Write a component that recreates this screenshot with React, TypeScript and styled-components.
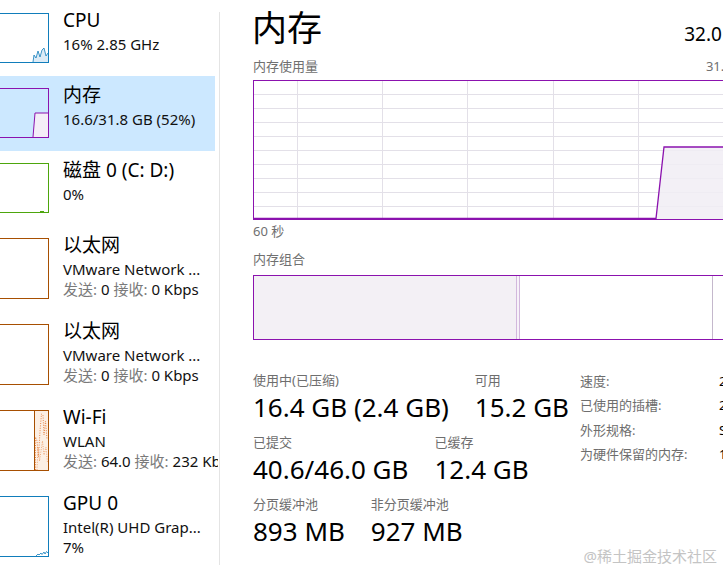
import React from "react";
import styled, { createGlobalStyle } from "styled-components";

const FONT = `"Noto Sans", "Noto Sans CJK SC", sans-serif`;

const Global = createGlobalStyle`
  html, body { margin: 0; padding: 0; background: #fff; overflow: hidden; }
  body { font-family: ${FONT}; color: #000; }
`;

const Page = styled.div`
  position: relative;
  display: flex;
  width: 723px;
  height: 571px;
  overflow: hidden;
  background: #fff;
`;

/* ---------- sidebar ---------- */

const Sidebar = styled.nav`
  flex: 0 0 218px;
  width: 218px;
  overflow: hidden;
  padding-top: 1px;
  box-sizing: border-box;
`;

const Divider = styled.div`
  flex: 0 0 1px;
  margin: 12px 0 6px 1px;
  background: #e4e4e4;
`;

const Row = styled.div<{ $selected?: boolean }>`
  display: flex;
  gap: 14px;
  width: 215px;
  padding: 12px 0 13px;
  background: ${(p) => (p.$selected ? "#cce8ff" : "transparent")};
  white-space: nowrap;
`;

const Thumb = styled.div<{ $color: string; $h: number }>`
  flex: 0 0 49px;
  height: ${(p) => p.$h}px;
  box-sizing: border-box;
  border: 1px solid ${(p) => p.$color};
  border-left: none;
  overflow: hidden;
  svg {
    display: block;
  }
`;

const RowText = styled.div`
  display: flex;
  flex-direction: column;
  margin-top: -6px;
  min-width: 0;
`;

const RowTitle = styled.div`
  font-size: 19px;
  line-height: 27px;
  color: #000;
`;

const RowSub = styled.div`
  font-size: 15px;
  line-height: 20px;
  color: #111;
`;

const Muted = styled.span`
  color: #7a7a7a;
`;

/* ---------- main ---------- */

const Main = styled.main`
  flex: 0 0 500px;
  width: 500px;
  padding: 8px 0 0 33px;
  display: flex;
  flex-direction: column;
`;

const Header = styled.header`
  display: flex;
  justify-content: space-between;
  align-items: baseline;
  height: 40px;
`;

const Title = styled.h1`
  margin: 0 0 0 -1px;
  font-size: 35px;
  line-height: 40px;
  font-weight: 400;
`;

const Total = styled.div`
  font-size: 19px;
  line-height: 24px;
`;

const CaptionRow = styled.div<{ $mt: number }>`
  display: flex;
  justify-content: space-between;
  margin-top: ${(p) => p.$mt}px;
  font-size: 13px;
  line-height: 18px;
  color: #707070;
`;

const Chart = styled.div`
  margin-top: 5px;
  height: 140px;
  box-sizing: border-box;
  border: 1px solid #8b12ae;
  svg {
    display: block;
  }
`;

const Composition = styled.div`
  margin-top: 7px;
  height: 65px;
  box-sizing: border-box;
  border: 1px solid #8b12ae;
  display: flex;
`;

const Segment = styled.div<{ $w?: number; $bg: string; $edge?: string; $edgeLeft?: string }>`
  flex: ${(p) => (p.$w ? `0 0 ${p.$w}px` : "1 1 auto")};
  background: ${(p) => p.$bg};
  border-right: ${(p) => (p.$edge ? `1px solid ${p.$edge}` : "none")};
  border-left: ${(p) => (p.$edgeLeft ? `1px solid ${p.$edgeLeft}` : "none")};
  box-sizing: border-box;
`;

const Stats = styled.section`
  display: flex;
  align-items: flex-start;
  margin-top: 32px;
`;

const StatsLeft = styled.div`
  flex: 0 0 327px;
  display: flex;
  flex-direction: column;
  gap: 10px;
`;

const StatRow = styled.div`
  display: flex;
  gap: 26px;
`;

const Stat = styled.div`
  display: flex;
  flex-direction: column;
`;

const StatLabel = styled.div`
  font-size: 13px;
  line-height: 16px;
  color: #6e6e6e;
  white-space: nowrap;
`;

const StatValue = styled.div`
  margin-top: 2px;
  font-size: 26px;
  line-height: 34px;
  color: #000;
  white-space: nowrap;
`;

const Specs = styled.div`
  display: grid;
  grid-template-columns: 139px auto;
  align-content: start;
  margin-top: -3px;
  font-size: 13px;
  line-height: 24.3px;
  white-space: nowrap;
`;

const SpecLabel = styled.div`
  color: #6e6e6e;
`;

const SpecValue = styled.div`
  color: #000;
`;

const Watermark = styled.div`
  position: absolute;
  right: 6px;
  bottom: 5px;
  font-size: 15px;
  line-height: 20px;
  color: #c4c4c4;
  font-family: ${FONT};
`;

/* ---------- thumbnail drawings ---------- */

const CpuGraph = () => (
  <svg width="48" height="48" viewBox="0 0 48 48">
    <polygon
      points="33,48 34,41 36,44 38,37 40,43 42,36 44,34 46,42 48,39 48,48"
      fill="#dcebf6"
    />
    <polyline
      points="33,48 34,41 36,44 38,37 40,43 42,36 44,34 46,42 48,39"
      fill="none"
      stroke="#117dbb"
      strokeWidth="0.8"
    />
  </svg>
);

const MemGraph = () => (
  <svg width="48" height="48" viewBox="0 0 48 48">
    <polygon points="33,48 35,24 48,24 48,48" fill="#f4eef7" />
    <polyline points="33,48 35,24 48,24" fill="none" stroke="#8b12ae" strokeWidth="1" />
  </svg>
);

const DiskGraph = () => (
  <svg width="48" height="48" viewBox="0 0 48 48">
    <line x1="40" y1="47.5" x2="44" y2="47.5" stroke="#4da60c" strokeWidth="1" />
  </svg>
);

const WifiGraph = () => (
  <svg width="48" height="59" viewBox="0 0 48 59">
    <rect x="34" y="0" width="14" height="59" fill="#fcefe4" />
    <line x1="34.5" y1="0" x2="34.5" y2="59" stroke="#a74f01" strokeWidth="1" />
    <polyline
      points="35.5,59 35.5,26 37,30 38.5,46 40,20 41.5,3 43,4 44,24 45.5,10 47,28"
      fill="none"
      stroke="#e8874a"
      strokeWidth="1"
      strokeDasharray="1 1.4"
    />
    <polyline
      points="37,59 38,36 39.5,50 41,40 42.5,30 44,44 46,36 47.5,52"
      fill="none"
      stroke="#f0a878"
      strokeWidth="1"
      strokeDasharray="1 1.4"
    />
  </svg>
);

const GpuGraph = () => (
  <svg width="48" height="59" viewBox="0 0 48 59">
    <polyline
      points="36,59 38,57 39,58 41,56 42,57.5 44,55 45,57 46.5,54.5 48,56"
      fill="none"
      stroke="#117dbb"
      strokeWidth="0.8"
    />
  </svg>
);

/* ---------- usage chart ---------- */

const UsageChart = () => {
  const w = 498;
  const h = 138;
  const hLines = Array.from({ length: 9 }, (_, i) => 14 * (i + 1) - 1);
  const vLines = [43, 128, 213, 299, 384, 469];
  return (
    <svg width={w} height={h} viewBox={`0 0 ${w} ${h}`}>
      {hLines.map((y) => (
        <line key={`h${y}`} x1="0" x2={w} y1={y + 0.5} y2={y + 0.5} stroke="#e3e0e8" strokeWidth="1" />
      ))}
      {vLines.map((x) => (
        <line key={`v${x}`} x1={x + 0.5} x2={x + 0.5} y1="0" y2={h} stroke="#e3e0e8" strokeWidth="1" />
      ))}
      <polygon points={`402,${h} 410,66 ${w},66 ${w},${h}`} fill="#f1edf4" fillOpacity="0.85" />
      <polyline
        points={`0,${h - 0.5} 402,${h - 0.5} 410,66 ${w},66`}
        fill="none"
        stroke="#8b12ae"
        strokeWidth="1.3"
      />
    </svg>
  );
};

/* ---------- data ---------- */

type Item = {
  title: string;
  lines: React.ReactNode[];
  color: string;
  h: number;
  graph?: React.ReactNode;
  selected?: boolean;
};

const net = (send: string, recv: string) => (
  <>
    <Muted>发送:</Muted> {send} <Muted>接收:</Muted> {recv}
  </>
);

const items: Item[] = [
  { title: "CPU", lines: ["16% 2.85 GHz"], color: "#117dbb", h: 50, graph: <CpuGraph /> },
  {
    title: "内存",
    lines: ["16.6/31.8 GB (52%)"],
    color: "#8b12ae",
    h: 50,
    graph: <MemGraph />,
    selected: true,
  },
  { title: "磁盘 0 (C: D:)", lines: ["0%"], color: "#4da60c", h: 50, graph: <DiskGraph /> },
  { title: "以太网", lines: ["VMware Network ...", net("0", "0 Kbps")], color: "#a74f01", h: 61 },
  { title: "以太网", lines: ["VMware Network ...", net("0", "0 Kbps")], color: "#a74f01", h: 61 },
  { title: "Wi-Fi", lines: ["WLAN", net("64.0", "232 Kbps")], color: "#a74f01", h: 61, graph: <WifiGraph /> },
  {
    title: "GPU 0",
    lines: ["Intel(R) UHD Grap...", "7%"],
    color: "#117dbb",
    h: 61,
    graph: <GpuGraph />,
  },
];

const specs: [string, string][] = [
  ["速度:", "2400 MHz"],
  ["已使用的插槽:", "2/2"],
  ["外形规格:", "SODIMM"],
  ["为硬件保留的内存:", "169 MB"],
];

export default function App() {
  return (
    <Page>
      <Global />
      <Sidebar>
        {items.map((it, i) => (
          <Row key={i} $selected={it.selected}>
            <Thumb $color={it.color} $h={it.h}>
              {it.graph}
            </Thumb>
            <RowText>
              <RowTitle>{it.title}</RowTitle>
              {it.lines.map((l, j) => (
                <RowSub key={j}>{l}</RowSub>
              ))}
            </RowText>
          </Row>
        ))}
      </Sidebar>
      <Divider />
      <Main>
        <Header>
          <Title>内存</Title>
          <Total>32.0 GB</Total>
        </Header>
        <CaptionRow $mt={9}>
          <span>内存使用量</span>
          <span>31.8 GB</span>
        </CaptionRow>
        <Chart>
          <UsageChart />
        </Chart>
        <CaptionRow $mt={2}>
          <span>60 秒</span>
          <span>0</span>
        </CaptionRow>
        <CaptionRow $mt={10}>
          <span>内存组合</span>
        </CaptionRow>
        <Composition>
          <Segment $w={262} $bg="#f3f0f5" />
          <Segment $w={4} $bg="#f7f2f9" $edge="#d2b8dd" $edgeLeft="#d2b8dd" />
          <Segment $w={193} $bg="#ffffff" $edge="#c4b8cc" />
          <Segment $bg="#ffffff" />
        </Composition>
        <Stats>
          <StatsLeft>
            <StatRow>
              <Stat>
                <StatLabel>使用中(已压缩)</StatLabel>
                <StatValue>16.4 GB (2.4 GB)</StatValue>
              </Stat>
              <Stat>
                <StatLabel>可用</StatLabel>
                <StatValue>15.2 GB</StatValue>
              </Stat>
            </StatRow>
            <StatRow>
              <Stat>
                <StatLabel>已提交</StatLabel>
                <StatValue>40.6/46.0 GB</StatValue>
              </Stat>
              <Stat>
                <StatLabel>已缓存</StatLabel>
                <StatValue>12.4 GB</StatValue>
              </Stat>
            </StatRow>
            <StatRow>
              <Stat>
                <StatLabel>分页缓冲池</StatLabel>
                <StatValue>893 MB</StatValue>
              </Stat>
              <Stat>
                <StatLabel>非分页缓冲池</StatLabel>
                <StatValue>927 MB</StatValue>
              </Stat>
            </StatRow>
          </StatsLeft>
          <Specs>
            {specs.map(([k, v]) => (
              <React.Fragment key={k}>
                <SpecLabel>{k}</SpecLabel>
                <SpecValue>{v}</SpecValue>
              </React.Fragment>
            ))}
          </Specs>
        </Stats>
      </Main>
      <Watermark>@稀土掘金技术社区</Watermark>
    </Page>
  );
}
